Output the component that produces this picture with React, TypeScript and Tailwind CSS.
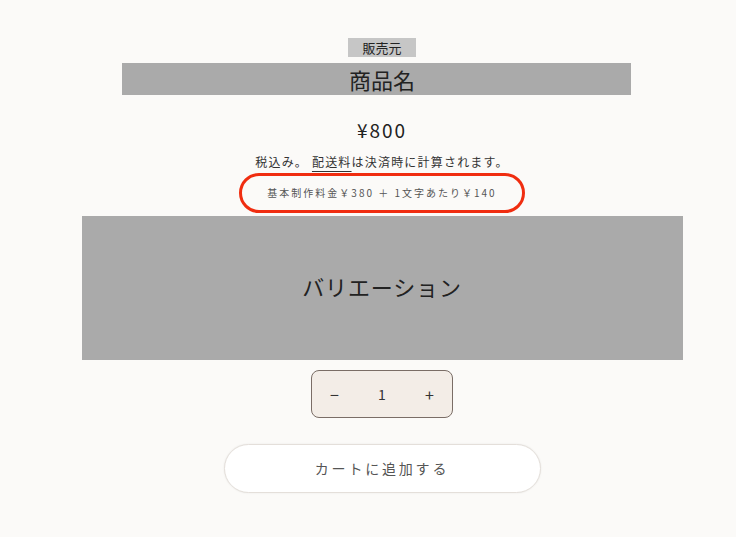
import type { FC } from 'react';

const font = { fontFamily: '"Noto Sans CJK JP", "Noto Sans", sans-serif' };

const App: FC = () => {
  return (
    <div className="min-h-[537px] w-full bg-[#fbfaf8] pl-[28px] text-[#222]" style={font}>
      <div className="flex flex-col items-center pt-[38px]">
        <div className="flex h-[19px] w-[68px] items-center justify-center bg-[#c6c6c6] text-[13px] leading-none">
          販売元
        </div>
        <div className="mt-[6px] ml-[-11px] flex h-[32px] w-[509px] items-center justify-center bg-[#aaaaaa] text-[22px] leading-none">
          <span className="ml-[11px]">商品名</span>
        </div>
        <div className="mt-[25px] text-[19px] leading-none tracking-[0.1em]">¥800</div>
        <div className="mt-[17px] text-[12px] leading-none tracking-[0.1em] text-[#333]">
          税込み。 <span className="underline underline-offset-[4px]">配送料</span>は決済時に計算されます。
        </div>
        <div className="mt-[5px] flex h-[40px] w-[286px] items-center justify-center rounded-full border-[3px] border-[#f02d10] text-[10px] leading-none tracking-[0.2em] text-[#555]">
          基本制作料金￥380 ＋ 1文字あたり￥140
        </div>
        <div className="mt-[3px] flex h-[144px] w-[601px] items-center justify-center bg-[#aaaaaa] pb-[5px] text-[22px] leading-none tracking-[0.04em]">
          バリエーション
        </div>
        <div className="mt-[10px] flex h-[48px] w-[142px] items-center justify-between rounded-[8px] border border-[#7a6d66] bg-[#f3ede7] px-[18px] text-[14px] text-[#333]">
          <span className="text-[16px]">−</span>
          <span>1</span>
          <span className="text-[16px]">+</span>
        </div>
        <div className="mt-[26px] flex h-[49px] w-[317px] items-center justify-center rounded-full border border-[#e4dfda] bg-white text-[14px] tracking-[0.2em] text-[#555] shadow-[0_0_2px_rgba(0,0,0,0.08)]">
          カートに追加する
        </div>
      </div>
    </div>
  );
};

export default App;
